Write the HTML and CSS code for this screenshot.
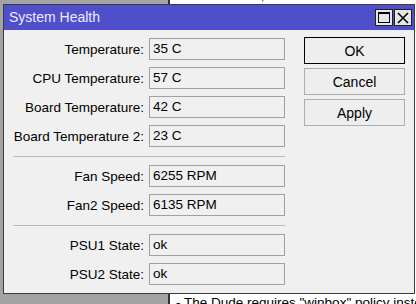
FILE: index.html
```html
<!DOCTYPE html>
<html lang="en">
<head>
    <meta charset="UTF-8">
    <meta name="viewport" content="width=device-width, initial-scale=1.0">
    <title>System Health</title>
    <link rel="stylesheet" href="styles.css">
</head>
<body>
    <div class="desk">
        <!-- document page behind the dialog -->
        <div class="doc">
            <p class="doc-top">for IT devices;</p>
            <p class="doc-bottom">- The Dude requires "winbox" policy instead of "read"</p>
        </div>

        <div class="window">
            <div class="titlebar">
                <span class="title">System Health</span>
                <div class="tb-btns">
                    <span class="tb-btn">
                        <svg width="12" height="11" viewBox="0 0 12 11"><rect x="0.5" y="0.5" width="11" height="10" fill="none" stroke="#000" stroke-width="1"/><line x1="0" y1="1.5" x2="12" y2="1.5" stroke="#000" stroke-width="1"/></svg>
                    </span>
                    <span class="tb-btn">
                        <svg width="12" height="12" viewBox="0 0 12 12"><path d="M1 1 L11 11 M11 1 L1 11" stroke="#000" stroke-width="1.6"/></svg>
                    </span>
                </div>
            </div>
            <div class="content">
                <div class="form">
                    <div class="row"><label>Temperature:</label><div class="field">35 C</div></div>
                    <div class="row"><label>CPU Temperature:</label><div class="field">57 C</div></div>
                    <div class="row"><label>Board Temperature:</label><div class="field">42 C</div></div>
                    <div class="row"><label>Board Temperature 2:</label><div class="field">23 C</div></div>
                    <div class="sep"></div>
                    <div class="row"><label>Fan Speed:</label><div class="field">6255 RPM</div></div>
                    <div class="row"><label>Fan2 Speed:</label><div class="field">6135 RPM</div></div>
                    <div class="sep"></div>
                    <div class="row"><label>PSU1 State:</label><div class="field">ok</div></div>
                    <div class="row"><label>PSU2 State:</label><div class="field">ok</div></div>
                </div>
                <div class="actions">
                    <button class="default">OK</button>
                    <button>Cancel</button>
                    <button>Apply</button>
                </div>
            </div>
        </div>
    </div>
</body>
</html>
```

FILE: styles.css
```css
body {
    margin: 0;
    font-family: "Liberation Sans", Arial, sans-serif;
    font-size: 13.5px;
    color: #000;
    overflow: hidden;
}
.desk {
    position: relative;
    width: 416px;
    height: 304px;
    background: #a3a3a3;
    overflow: hidden;
}
.doc {
    position: absolute;
    left: 168px;
    top: 0;
    right: 0;
    bottom: 0;
    background: #fff;
    border-left: 2px solid #333;
}
.doc p {
    margin: 0;
    white-space: nowrap;
    font-size: 13.5px;
    line-height: 15px;
}
.doc-top {
    position: absolute;
    left: 10px;
    top: -12px;
}
.doc-bottom {
    position: absolute;
    left: 6px;
    top: 295px;
}
.window {
    position: absolute;
    left: 3px;
    top: 4px;
    width: 412px;
    height: 290px;
    box-sizing: border-box;
    border: 1px solid #3c3c3c;
    background: #f0f0f0;
}
.titlebar {
    height: 25px;
    background: #4f4fcb;
    display: flex;
    align-items: center;
    justify-content: space-between;
    padding-left: 5px;
    padding-right: 2px;
}
.title {
    color: #ececff;
    font-size: 14px;
    line-height: 25px;
}
.tb-btns {
    display: flex;
    gap: 1px;
}
.tb-btn {
    width: 18px;
    height: 17px;
    box-sizing: border-box;
    border: 1px solid #202020;
    background: #e6e6e6;
    display: flex;
    align-items: center;
    justify-content: center;
}
.content {
    display: flex;
    padding-top: 8px;
}
.form {
    display: flex;
    flex-direction: column;
    gap: 7px;
    flex-shrink: 0;
}
.row {
    display: flex;
    align-items: center;
}
.row label {
    flex: 0 0 145px;
    text-align: right;
    padding-right: 5px;
    box-sizing: border-box;
    white-space: nowrap;
}
.field {
    flex: 0 0 136px;
    height: 22px;
    box-sizing: border-box;
    border: 1px solid #a0a0a0;
    padding-left: 3px;
    line-height: 20px;
}
.sep {
    height: 1px;
    background: #b9b9b9;
    margin: 2px 0 1px 9px;
}
.actions {
    display: flex;
    flex-direction: column;
    gap: 4px;
    margin-left: 19px;
    margin-top: -1px;
    flex-shrink: 0;
}
.actions button {
    width: 101px;
    height: 27px;
    font-family: "Liberation Sans", Arial, sans-serif;
    font-size: 14px;
    color: #000;
    background: #eeeeee;
    border: 1px solid #adadad;
    padding: 0;
}
.actions button.default {
    border-color: #000;
}
```
